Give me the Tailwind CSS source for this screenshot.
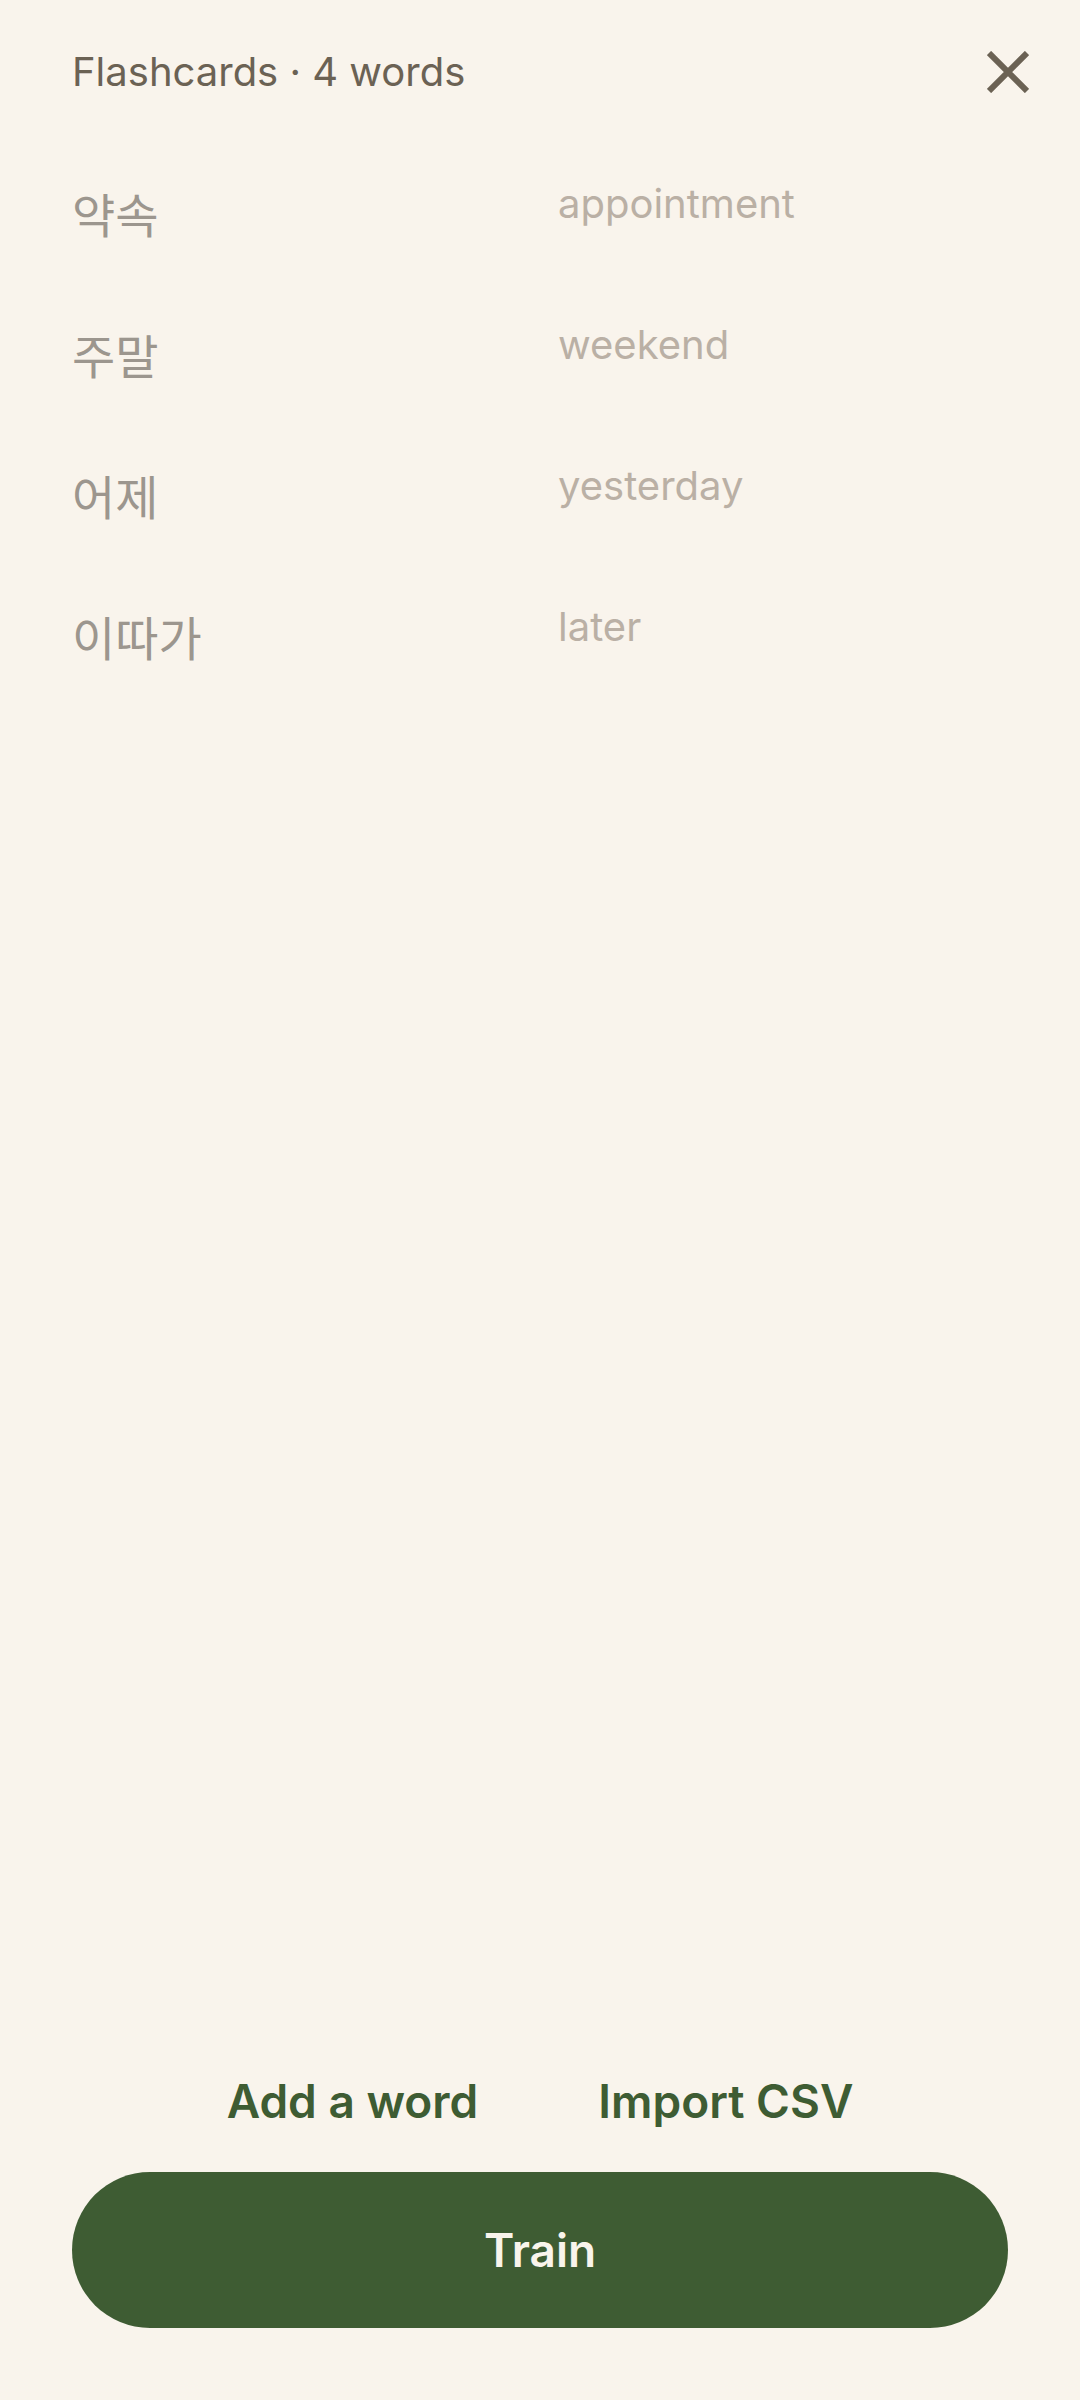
<!DOCTYPE html>
<html lang="en">
<head>
    <meta charset="UTF-8">
    <meta name="viewport" content="width=device-width, initial-scale=1.0">
    <title>Flashcards</title>
    <script src="https://cdn.jsdelivr.net/npm/@tailwindcss/browser@4"></script>
</head>
<body class="flex min-h-screen flex-col bg-[#f9f4ec] font-['Inter','Noto_Sans_CJK_KR',sans-serif] text-[#6b6254]">
    <!-- Header -->
    <header class="flex items-center justify-between pt-6 pr-6 pl-18">
        <h1 class="text-[40px] leading-[48px]">Flashcards · 4 words</h1>
        <button type="button" aria-label="Close" class="flex size-24 items-center justify-center">
            <svg class="size-[42px]" viewBox="0 0 42 42" fill="none" stroke="currentColor" stroke-width="6">
                <path d="M2 2L40 40M40 2L2 40" />
            </svg>
        </button>
    </header>

    <!-- Word list -->
    <main class="grow px-18 pt-9">
        <ul class="text-[#bab0a5]">
            <li class="grid h-[141px] grid-cols-[1fr_450px] gap-x-9 pt-6">
                <span lang="ko" class="text-[47px] leading-[72px] text-[#9c968e]">약속</span>
                <span class="text-[40px] leading-[48px]">appointment</span>
            </li>
            <li class="grid h-[141px] grid-cols-[1fr_450px] gap-x-9 pt-6">
                <span lang="ko" class="text-[47px] leading-[72px] text-[#9c968e]">주말</span>
                <span class="text-[40px] leading-[48px]">weekend</span>
            </li>
            <li class="grid h-[141px] grid-cols-[1fr_450px] gap-x-9 pt-6">
                <span lang="ko" class="text-[47px] leading-[72px] text-[#9c968e]">어제</span>
                <span class="text-[40px] leading-[48px]">yesterday</span>
            </li>
            <li class="grid h-[141px] grid-cols-[1fr_450px] gap-x-9 pt-6">
                <span lang="ko" class="text-[47px] leading-[72px] text-[#9c968e]">이따가</span>
                <span class="text-[40px] leading-[48px]">later</span>
            </li>
        </ul>
    </main>

    <!-- Actions -->
    <footer class="px-18 pb-18 text-[46px] leading-[54px] font-semibold">
        <div class="mb-11 flex justify-center gap-[120px] text-[#3e5c33]">
            <button type="button">Add a word</button>
            <button type="button">Import CSV</button>
        </div>
        <button type="button" class="h-[156px] w-full rounded-full bg-[#3e5c33] text-[#f9f4ec]">Train</button>
    </footer>
</body>
</html>
